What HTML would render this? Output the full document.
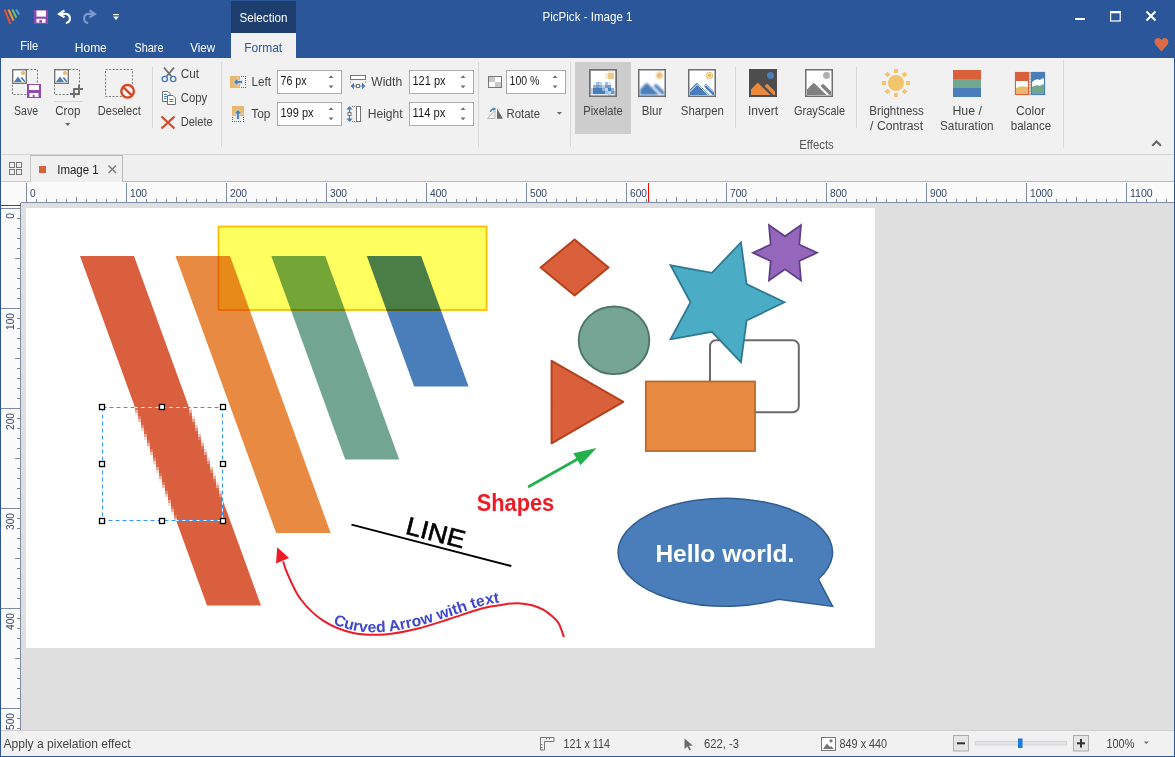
<!DOCTYPE html>
<html><head><meta charset="utf-8">
<style>
*{margin:0;padding:0}
html,body{width:1175px;height:757px;overflow:hidden;background:#f1f1f1}
svg{display:block;font-family:"Liberation Sans",sans-serif}
</style></head><body>
<svg width="1175" height="757" viewBox="0 0 1175 757">
<rect x="0" y="0" width="1175" height="58" fill="#2b579a"/>
<rect x="231" y="1" width="65" height="32" fill="#1e3e6e"/>
<rect x="231" y="33" width="65" height="25" fill="#f1f1f1"/>
<rect x="1" y="58" width="1173" height="96" fill="#f1f1f1"/>
<rect x="1" y="154" width="1173" height="1" fill="#d5d5d5"/>
<rect x="1" y="155" width="1173" height="27" fill="#f0f0f0"/>
<rect x="1" y="181" width="30" height="1" fill="#c9c9c9"/>
<rect x="30" y="155" width="1" height="27" fill="#c9c9c9"/>
<rect x="31" y="155" width="92" height="1" fill="#b9b9b9"/>
<rect x="122" y="155" width="1" height="27" fill="#b9b9b9"/>
<rect x="123" y="181" width="1051" height="1" fill="#b9b9b9"/>
<rect x="1" y="182" width="1173" height="21" fill="#fbfbfb"/>
<rect x="1" y="182" width="20" height="548" fill="#fbfbfb"/>
<rect x="21" y="203" width="1153" height="527" fill="#dfdfdf"/>
<rect x="26" y="208" width="849" height="440" fill="#ffffff"/>
<rect x="1" y="730" width="1173" height="1" fill="#cfcfcf"/>
<rect x="1" y="731" width="1173" height="25" fill="#f1f1f1"/>
<rect x="0" y="0" width="1" height="757" fill="#2b579a"/>
<rect x="1174" y="0" width="1" height="757" fill="#2b579a"/>
<rect x="0" y="756" width="1175" height="1" fill="#2b579a"/>
<g stroke-width="2" stroke-linecap="butt"><line x1="4.6" y1="9.5" x2="10.4" y2="24" stroke="#e8542b"/><line x1="8.4" y1="9.5" x2="13.6" y2="20.6" stroke="#f39c35"/><line x1="12.2" y1="9.5" x2="16.4" y2="17.6" stroke="#7cc06a"/><line x1="16" y1="9.5" x2="19.2" y2="14.4" stroke="#4aa0d8"/></g>
<rect x="34" y="10" width="14" height="14" fill="#8e4bb0"/>
<rect x="36.5" y="10.5" width="9.4" height="6.1" fill="#ffffff"/>
<rect x="36.5" y="18.8" width="9" height="3.9" fill="#ffffff"/>
<rect x="39.3" y="19.9" width="2.7" height="2.8" fill="#8e4bb0"/>
<path d="M64.5 10.3 L59 13.9 L64.5 17.4" fill="none" stroke="#fff" stroke-width="2.1" stroke-linejoin="miter"/>
<path d="M59.5 13.9 H65.6 A4.6 4.6 0 0 1 66.2 23 H65.8" fill="none" stroke="#fff" stroke-width="2.1"/>
<path d="M89.5 10.3 L95 13.9 L89.5 17.4" fill="none" stroke="#7c9acb" stroke-width="2.1" stroke-linejoin="miter"/>
<path d="M94.5 13.9 H88.4 A4.6 4.6 0 0 0 87.8 23 H88.2" fill="none" stroke="#7c9acb" stroke-width="2.1"/>
<rect x="113" y="14" width="6" height="1.2" fill="#ffffff"/>
<path d="M113 16.5 H119 L116 20 Z" fill="#fff"/>
<text x="587.5" y="21" font-size="12" fill="#ffffff" text-anchor="middle" textLength="90" lengthAdjust="spacingAndGlyphs">PicPick - Image 1</text>
<text x="263.5" y="22" font-size="12" fill="#ffffff" text-anchor="middle" textLength="48" lengthAdjust="spacingAndGlyphs">Selection</text>
<rect x="1075" y="18" width="10" height="2" fill="#fff"/>
<rect x="1110.6" y="11.6" width="9.6" height="9.4" fill="none" stroke="#fff" stroke-width="1.2"/>
<rect x="1110" y="11" width="10.8" height="2.3" fill="#fff"/>
<path d="M1146.5 11.5 L1155.5 20.5 M1155.5 11.5 L1146.5 20.5" stroke="#fff" stroke-width="2"/>
<path d="M1161.5 51.5 L1155.8 45 C1153.5 42.2 1154.6 38 1158.2 38 C1159.8 38 1160.9 39 1161.5 40.2 C1162.1 39 1163.2 38 1164.8 38 C1168.4 38 1169.5 42.2 1167.2 45 Z" fill="#de6a45"/>
<text x="29.3" y="50" font-size="12" fill="#fff" text-anchor="middle" textLength="18" lengthAdjust="spacingAndGlyphs">File</text>
<text x="90.8" y="52" font-size="12" fill="#fff" text-anchor="middle" textLength="32" lengthAdjust="spacingAndGlyphs">Home</text>
<text x="149" y="52" font-size="12" fill="#fff" text-anchor="middle" textLength="29" lengthAdjust="spacingAndGlyphs">Share</text>
<text x="202.7" y="52" font-size="12" fill="#fff" text-anchor="middle" textLength="25" lengthAdjust="spacingAndGlyphs">View</text>
<text x="263.2" y="52" font-size="12" fill="#2b579a" text-anchor="middle" textLength="38" lengthAdjust="spacingAndGlyphs">Format</text>
<rect x="12.5" y="69.5" width="25" height="25" fill="none" stroke="#7a7a7a" stroke-width="1" stroke-dasharray="2 1.6"/>
<rect x="12.7" y="69.7" width="13.6" height="13.6" fill="#fff" stroke="#767676" stroke-width="1.4"/>
<circle cx="23" cy="73" r="2" fill="#e8b86d"/>
<path d="M14 82 L18 76.5 L22 82 Z" fill="#4a7ebb"/>
<path d="M20.5 78 L22 77 L25 80.5 L25 82 L24 82 Z" fill="#4a7ebb"/>
<rect x="27" y="84" width="14" height="14" fill="#8e4bb0"/>
<rect x="29" y="85" width="10" height="5" fill="#fff"/>
<rect x="29.5" y="93" width="9" height="4" fill="#fff"/>
<rect x="32.7" y="94.8" width="2" height="2.2" fill="#8e4bb0"/>
<text x="26" y="115" font-size="12" fill="#444444" text-anchor="middle" textLength="24" lengthAdjust="spacingAndGlyphs">Save</text>
<rect x="54.5" y="69.5" width="25" height="25" fill="none" stroke="#7a7a7a" stroke-width="1" stroke-dasharray="2 1.6"/>
<rect x="54.7" y="69.7" width="13.6" height="13.6" fill="#fff" stroke="#767676" stroke-width="1.4"/>
<circle cx="65" cy="73" r="2" fill="#e8b86d"/>
<path d="M56 82 L60 76.5 L64 82 Z" fill="#4a7ebb"/>
<path d="M62.5 78 L64 77 L67 80.5 L67 82 L66 82 Z" fill="#4a7ebb"/>
<path d="M74 89 V97.8 M70 94 H79.8 M79 84.8 V94.8 M73.2 89 H83" fill="none" stroke="#6e6e6e" stroke-width="1.9"/>
<rect x="54" y="101" width="29" height="1" fill="#d3d3d3"/>
<text x="67.8" y="115" font-size="12" fill="#444444" text-anchor="middle" textLength="25" lengthAdjust="spacingAndGlyphs">Crop</text>
<path d="M65 123 H70.5 L67.75 126 Z" fill="#6a6a6a"/>
<rect x="105.5" y="69.5" width="27" height="27" fill="none" stroke="#7a7a7a" stroke-width="1" stroke-dasharray="2 1.6"/>
<circle cx="127.6" cy="91.3" r="6.3" fill="#f1f1f1" stroke="#d24726" stroke-width="2.4"/>
<line x1="123.2" y1="87" x2="132" y2="95.6" stroke="#d24726" stroke-width="2.4"/>
<text x="119.3" y="115" font-size="12" fill="#444444" text-anchor="middle" textLength="43" lengthAdjust="spacingAndGlyphs">Deselect</text>
<rect x="152" y="67" width="1" height="61" fill="#d8d8d8"/>
<path d="M164 67.5 L171.5 76.5 M174 67.5 L166.5 76.5" stroke="#6e6e6e" stroke-width="1.8"/>
<circle cx="164.8" cy="79" r="2.6" fill="none" stroke="#4a7ebb" stroke-width="1.4"/>
<circle cx="173.2" cy="79" r="2.6" fill="none" stroke="#4a7ebb" stroke-width="1.4"/>
<text x="180.7" y="78" font-size="12" fill="#444444" textLength="18.3" lengthAdjust="spacingAndGlyphs">Cut</text>
<path d="M162.5 91.5 H168 L170 93.5 V101.5 H162.5 Z" fill="#fff" stroke="#6e6e6e" stroke-width="1"/>
<path d="M167.5 95.5 H173 L175.5 98 V104.5 H167.5 Z" fill="#fff" stroke="#6e6e6e" stroke-width="1"/>
<path d="M164 94.5 H167 M164 96.5 H167 M164 98.5 H166.5 M169.5 99.5 H173.5 M169.5 101.5 H173.5" stroke="#4a7ebb" stroke-width="1"/>
<text x="180.7" y="102" font-size="12" fill="#444444" textLength="26.5" lengthAdjust="spacingAndGlyphs">Copy</text>
<path d="M161.5 116.5 L174.5 128.5 M174.5 116.5 L161.5 128.5" stroke="#d24726" stroke-width="2.2"/>
<text x="180.7" y="126" font-size="12" fill="#444444" textLength="32" lengthAdjust="spacingAndGlyphs">Delete</text>
<rect x="221" y="62" width="1" height="85" fill="#d8d8d8"/>
<rect x="230" y="76" width="10" height="12" fill="#e8b86d"/>
<rect x="241" y="76" width="1" height="1" fill="#666"/>
<rect x="241" y="87" width="1" height="1" fill="#666"/>
<rect x="243" y="76" width="1" height="1" fill="#666"/>
<rect x="243" y="87" width="1" height="1" fill="#666"/>
<rect x="245" y="76" width="1" height="1" fill="#666"/>
<rect x="245" y="87" width="1" height="1" fill="#666"/>
<rect x="245" y="78" width="1" height="1" fill="#666"/>
<rect x="245" y="80" width="1" height="1" fill="#666"/>
<rect x="245" y="82" width="1" height="1" fill="#666"/>
<rect x="245" y="84" width="1" height="1" fill="#666"/>
<path d="M233.5 82 L237.8 77.8 V80.6 H242.5 V83.4 H237.8 V86.2 Z" fill="#4a7ebb" stroke="#fff" stroke-width="0.6"/>
<text x="251.5" y="86" font-size="12" fill="#444444" textLength="19.5" lengthAdjust="spacingAndGlyphs">Left</text>
<rect x="277.5" y="70.5" width="64" height="23" fill="#fff" stroke="#acacac" stroke-width="1"/>
<text x="280.5" y="84.7" font-size="12" fill="#1a1a1a" textLength="26" lengthAdjust="spacingAndGlyphs">76 px</text>
<path d="M328.5 78 H333.5 L331 75.3 Z M328.5 85.5 H333.5 L331 88.3 Z" fill="#707070"/>
<rect x="232" y="106" width="12" height="10" fill="#e8b86d"/>
<rect x="232" y="117" width="1" height="1" fill="#666"/>
<rect x="243" y="117" width="1" height="1" fill="#666"/>
<rect x="232" y="119" width="1" height="1" fill="#666"/>
<rect x="243" y="119" width="1" height="1" fill="#666"/>
<rect x="232" y="121" width="1" height="1" fill="#666"/>
<rect x="243" y="121" width="1" height="1" fill="#666"/>
<rect x="234" y="121" width="1" height="1" fill="#666"/>
<rect x="236" y="121" width="1" height="1" fill="#666"/>
<rect x="238" y="121" width="1" height="1" fill="#666"/>
<rect x="240" y="121" width="1" height="1" fill="#666"/>
<path d="M238 109.5 L233.8 113.8 H236.6 V119.5 H239.4 V113.8 H242.2 Z" fill="#4a7ebb" stroke="#fff" stroke-width="0.6"/>
<text x="251.3" y="118" font-size="12" fill="#444444" textLength="19.2" lengthAdjust="spacingAndGlyphs">Top</text>
<rect x="277.5" y="102.5" width="64" height="23" fill="#fff" stroke="#acacac" stroke-width="1"/>
<text x="280.5" y="116.7" font-size="12" fill="#1a1a1a" textLength="33" lengthAdjust="spacingAndGlyphs">199 px</text>
<path d="M328.5 110 H333.5 L331 107.3 Z M328.5 117.5 H333.5 L331 120.3 Z" fill="#707070"/>
<rect x="350.5" y="75.5" width="15" height="4" fill="#fff" stroke="#777" stroke-width="1"/>
<path d="M350.5 81.5 V83 M365.5 81.5 V83" stroke="#777" stroke-width="1" stroke-dasharray="1 1"/>
<path d="M350.5 86 L354 82.8 V89.2 Z M365.5 86 L362 82.8 V89.2 Z" fill="#4a7ebb"/><path d="M353.5 86 H356.5 M359.5 86 H362.5" stroke="#4a7ebb" stroke-width="1.2"/>
<rect x="356.5" y="84.5" width="3" height="3" fill="none" stroke="#777" stroke-width="1"/>
<text x="371.2" y="86" font-size="12" fill="#444444" textLength="31" lengthAdjust="spacingAndGlyphs">Width</text>
<rect x="409.5" y="70.5" width="64" height="23" fill="#fff" stroke="#acacac" stroke-width="1"/>
<text x="412.5" y="84.7" font-size="12" fill="#1a1a1a" textLength="33" lengthAdjust="spacingAndGlyphs">121 px</text>
<path d="M460.5 78 H465.5 L463 75.3 Z M460.5 85.5 H465.5 L463 88.3 Z" fill="#707070"/>
<rect x="356.5" y="106.5" width="4" height="15" fill="#fff" stroke="#777" stroke-width="1"/>
<path d="M349.5 106 L346.3 109.5 H352.7 Z M349.5 122 L346.3 118.5 H352.7 Z" fill="#4a7ebb"/><path d="M349.5 109 V112.5 M349.5 115.5 V119" stroke="#4a7ebb" stroke-width="1.2"/>
<rect x="348" y="112.5" width="3" height="3" fill="none" stroke="#777" stroke-width="1"/>
<path d="M352 106.5 H355 M352 121.5 H355" stroke="#777" stroke-width="1" stroke-dasharray="1 1"/>
<text x="367.7" y="118" font-size="12" fill="#444444" textLength="35" lengthAdjust="spacingAndGlyphs">Height</text>
<rect x="409.5" y="102.5" width="64" height="23" fill="#fff" stroke="#acacac" stroke-width="1"/>
<text x="412.5" y="116.7" font-size="12" fill="#1a1a1a" textLength="33" lengthAdjust="spacingAndGlyphs">114 px</text>
<path d="M460.5 110 H465.5 L463 107.3 Z M460.5 117.5 H465.5 L463 120.3 Z" fill="#707070"/>
<rect x="478" y="62" width="1" height="85" fill="#d8d8d8"/>
<rect x="488.5" y="76.5" width="13" height="11" fill="#fff" stroke="#777" stroke-width="1"/>
<rect x="489" y="77" width="6" height="5" fill="#c8c8c8"/>
<rect x="495" y="82" width="6" height="5" fill="#c8c8c8"/>
<rect x="506.5" y="70.5" width="59" height="23" fill="#fff" stroke="#acacac" stroke-width="1"/>
<text x="509.5" y="84.7" font-size="12" fill="#1a1a1a" textLength="30" lengthAdjust="spacingAndGlyphs">100 %</text>
<path d="M552.5 78 H557.5 L555 75.3 Z M552.5 85.5 H557.5 L555 88.3 Z" fill="#707070"/>
<path d="M487.5 118.5 L495 110.5 V118.5 Z" fill="none" stroke="#bcbcbc" stroke-width="1"/>
<path d="M497 118.7 V108.5 L503 118.7 Z" fill="#6a6a6a"/>
<path d="M490.5 112 Q491 109 494 109" fill="none" stroke="#4a7ebb" stroke-width="1.3"/>
<path d="M493.5 107 L496 109 L493.5 111 Z" fill="#4a7ebb"/>
<text x="506.5" y="118" font-size="12" fill="#444444" textLength="33.5" lengthAdjust="spacingAndGlyphs">Rotate</text>
<path d="M556.8 112 H562 L559.4 114.8 Z" fill="#6a6a6a"/>
<rect x="570" y="62" width="1" height="85" fill="#d8d8d8"/>
<rect x="575" y="62" width="56" height="72" fill="#cdcdcd"/>
<rect x="589.75" y="69.75" width="26.5" height="26.5" fill="#fff" stroke="#6f6f6f" stroke-width="1.5"/>
<rect x="608" y="70" width="3" height="3" fill="#f8ebd3"/>
<rect x="611" y="70" width="3" height="3" fill="#f8ebd3"/>
<rect x="605" y="73" width="3" height="3" fill="#f8ebd3"/>
<rect x="608" y="73" width="3" height="3" fill="#ecc889"/>
<rect x="611" y="73" width="3" height="3" fill="#ecc889"/>
<rect x="605" y="76" width="3" height="3" fill="#f8ebd3"/>
<rect x="608" y="76" width="3" height="3" fill="#ecc889"/>
<rect x="611" y="76" width="3" height="3" fill="#ecc889"/>
<rect x="593" y="82" width="3" height="3" fill="#eef3f9"/>
<rect x="596" y="82" width="3" height="3" fill="#a3bfdf"/>
<rect x="599" y="82" width="3" height="3" fill="#bcd0e7"/>
<rect x="605" y="82" width="3" height="3" fill="#a3bfdf"/>
<rect x="608" y="82" width="3" height="3" fill="#dfe8f3"/>
<rect x="593" y="85" width="3" height="3" fill="#8eb0d6"/>
<rect x="596" y="85" width="3" height="3" fill="#6f9acb"/>
<rect x="599" y="85" width="3" height="3" fill="#8eb0d6"/>
<rect x="602" y="85" width="3" height="3" fill="#bcd0e7"/>
<rect x="605" y="85" width="3" height="3" fill="#6f9acb"/>
<rect x="608" y="85" width="3" height="3" fill="#6f9acb"/>
<rect x="611" y="85" width="3" height="3" fill="#eef3f9"/>
<rect x="590" y="88" width="3" height="3" fill="#bcd0e7"/>
<rect x="593" y="88" width="3" height="3" fill="#4a7ebb"/>
<rect x="596" y="88" width="3" height="3" fill="#4a7ebb"/>
<rect x="599" y="88" width="3" height="3" fill="#4a7ebb"/>
<rect x="602" y="88" width="3" height="3" fill="#8eb0d6"/>
<rect x="605" y="88" width="3" height="3" fill="#bcd0e7"/>
<rect x="608" y="88" width="3" height="3" fill="#4a7ebb"/>
<rect x="611" y="88" width="3" height="3" fill="#8eb0d6"/>
<rect x="614" y="88" width="3" height="3" fill="#dfe8f3"/>
<rect x="590" y="91" width="3" height="3" fill="#bcd0e7"/>
<rect x="593" y="91" width="3" height="3" fill="#4a7ebb"/>
<rect x="596" y="91" width="3" height="3" fill="#4a7ebb"/>
<rect x="599" y="91" width="3" height="3" fill="#4a7ebb"/>
<rect x="602" y="91" width="3" height="3" fill="#4a7ebb"/>
<rect x="605" y="91" width="3" height="3" fill="#a3bfdf"/>
<rect x="608" y="91" width="3" height="3" fill="#bcd0e7"/>
<rect x="611" y="91" width="3" height="3" fill="#6f9acb"/>
<rect x="614" y="91" width="3" height="3" fill="#a3bfdf"/>
<rect x="590" y="94" width="3" height="2.5" fill="#dfe8f3"/>
<rect x="593" y="94" width="3" height="2.5" fill="#dfe8f3"/>
<rect x="596" y="94" width="3" height="2.5" fill="#dfe8f3"/>
<rect x="599" y="94" width="3" height="2.5" fill="#dfe8f3"/>
<rect x="602" y="94" width="3" height="2.5" fill="#dfe8f3"/>
<rect x="605" y="94" width="3" height="2.5" fill="#dfe8f3"/>
<rect x="608" y="94" width="3" height="2.5" fill="#bcd0e7"/>
<rect x="611" y="94" width="3" height="2.5" fill="#dfe8f3"/>
<rect x="614" y="94" width="3" height="2.5" fill="#bcd0e7"/>
<rect x="589.75" y="69.75" width="26.5" height="26.5" fill="none" stroke="#6f6f6f" stroke-width="1.5"/>
<text x="603" y="115" font-size="12" fill="#444444" text-anchor="middle" textLength="39.5" lengthAdjust="spacingAndGlyphs">Pixelate</text>
<rect x="638.75" y="69.75" width="26.5" height="26.5" fill="#fff" stroke="#6f6f6f" stroke-width="1.5"/>
<defs><filter id="bl" x="-20%" y="-20%" width="140%" height="140%"><feGaussianBlur stdDeviation="0.9"/></filter></defs>
<g filter="url(#bl)">
<path d="M640 95 V89.5 L646 83.3 Q646.7 82.6 647.4 83.3 L659.5 95 Z" fill="#4a7ebb"/>
<path d="M653.5 86 L655.3 84.2 Q656 83.6 656.7 84.2 L664 91.4 V95 H662.5 Z" fill="#4a7ebb"/>
<circle cx="659.5" cy="75.5" r="3.2" fill="#e8b86d"/>
</g>
<text x="652" y="115" font-size="12" fill="#444444" text-anchor="middle" textLength="20.5" lengthAdjust="spacingAndGlyphs">Blur</text>
<rect x="688.75" y="69.75" width="26.5" height="26.5" fill="#fff" stroke="#6f6f6f" stroke-width="1.5"/>
<path d="M690 95 V89.5 L696 83.3 Q696.7 82.6 697.4 83.3 L709.5 95 Z" fill="#4a7ebb"/>
<path d="M703.5 86 L705.3 84.2 Q706 83.6 706.7 84.2 L714 91.4 V95 H712.5 Z" fill="#4a7ebb"/>
<path d="M690 91.5 L696.7 85 Q697.4 84.4 698.1 85 L708.2 95 M704 86.4 L705.7 85.2 Q706.2 84.9 706.8 85.4 L713.8 92.4" fill="none" stroke="#fff" stroke-width="0.9"/>
<circle cx="709.5" cy="75.5" r="3.5" fill="#e8b86d"/>
<circle cx="709.5" cy="75.5" r="2.3" fill="none" stroke="#fff" stroke-width="0.8"/>
<text x="702.3" y="115" font-size="12" fill="#444444" text-anchor="middle" textLength="43" lengthAdjust="spacingAndGlyphs">Sharpen</text>
<rect x="735" y="67" width="1" height="61" fill="#d8d8d8"/>
<rect x="749.75" y="69.75" width="26.5" height="26.5" fill="#4d4d4d" stroke="#4d4d4d" stroke-width="1.5"/>
<path d="M751 95 V89.5 L757 83.3 Q757.7 82.6 758.4 83.3 L770.5 95 Z" fill="#e8893d"/>
<path d="M764.5 86 L766.3 84.2 Q767 83.6 767.7 84.2 L775 91.4 V95 H773.5 Z" fill="#e8893d"/>
<circle cx="770.5" cy="75.5" r="3.5" fill="#4a7ebb"/>
<text x="763" y="115" font-size="12" fill="#444444" text-anchor="middle" textLength="30" lengthAdjust="spacingAndGlyphs">Invert</text>
<rect x="805.75" y="69.75" width="26.5" height="26.5" fill="#fff" stroke="#6f6f6f" stroke-width="1.5"/>
<path d="M807 95 V89.5 L813 83.3 Q813.7 82.6 814.4 83.3 L826.5 95 Z" fill="#808080"/>
<path d="M820.5 86 L822.3 84.2 Q823 83.6 823.7 84.2 L831 91.4 V95 H829.5 Z" fill="#808080"/>
<circle cx="826.5" cy="75.5" r="3.4" fill="#b0b0b0"/>
<text x="819.6" y="115" font-size="12" fill="#444444" text-anchor="middle" textLength="51" lengthAdjust="spacingAndGlyphs">GrayScale</text>
<rect x="856" y="67" width="1" height="61" fill="#d8d8d8"/>
<text x="816.5" y="149" font-size="12" fill="#555" text-anchor="middle" textLength="34.5" lengthAdjust="spacingAndGlyphs">Effects</text>
<circle cx="896" cy="83" r="8" fill="#f2c46d"/>
<rect x="906.0" y="81.0" width="4" height="4" fill="#f2c46d" transform="rotate(0 908.0 83.0)"/>
<rect x="902.4852813742385" y="89.48528137423857" width="4" height="4" fill="#f2c46d" transform="rotate(45 904.4852813742385 91.48528137423857)"/>
<rect x="894.0" y="93.0" width="4" height="4" fill="#f2c46d" transform="rotate(90 896.0 95.0)"/>
<rect x="885.5147186257615" y="89.48528137423857" width="4" height="4" fill="#f2c46d" transform="rotate(135 887.5147186257615 91.48528137423857)"/>
<rect x="882.0" y="81.0" width="4" height="4" fill="#f2c46d" transform="rotate(180 884.0 83.0)"/>
<rect x="885.5147186257615" y="72.51471862576143" width="4" height="4" fill="#f2c46d" transform="rotate(225 887.5147186257615 74.51471862576143)"/>
<rect x="894.0" y="69.0" width="4" height="4" fill="#f2c46d" transform="rotate(270 896.0 71.0)"/>
<rect x="902.4852813742385" y="72.51471862576143" width="4" height="4" fill="#f2c46d" transform="rotate(315 904.4852813742385 74.51471862576143)"/>
<text x="896.6" y="115" font-size="12" fill="#444444" text-anchor="middle" textLength="54.5" lengthAdjust="spacingAndGlyphs">Brightness</text>
<text x="896.6" y="130" font-size="12" fill="#444444" text-anchor="middle" textLength="53" lengthAdjust="spacingAndGlyphs">/ Contrast</text>
<rect x="953" y="70" width="28" height="9" fill="#d9603b"/>
<rect x="953" y="79" width="28" height="9" fill="#72a68f"/>
<rect x="953" y="88" width="28" height="9" fill="#4a7ebb"/>
<text x="967.2" y="115" font-size="12" fill="#444444" text-anchor="middle" textLength="29.5" lengthAdjust="spacingAndGlyphs">Hue /</text>
<text x="966.8" y="130" font-size="12" fill="#444444" text-anchor="middle" textLength="53.5" lengthAdjust="spacingAndGlyphs">Saturation</text>
<rect x="1015.5" y="72.5" width="13" height="22" fill="#fff" stroke="#d9603b" stroke-width="1.2"/>
<rect x="1031.5" y="72.5" width="13" height="22" fill="#fff" stroke="#4a7ebb" stroke-width="1.2"/>
<path d="M1016 94 V84 Q1018 79 1021 81 Q1024 78 1028 82 V94 Z" fill="#fff"/>
<path d="M1016 94 V88 Q1021 85 1028 87 V94 Z" fill="#e8b86d"/>
<path d="M1032 94 V87 Q1036 84 1040 86 Q1043 83 1044 85 V94 Z" fill="#72a68f"/>
<rect x="1016" y="73" width="12" height="8" fill="#d9603b"/>
<path d="M1016 81 Q1018 77 1021 79 Q1024 76 1028 80 V73 H1016 Z" fill="#d9603b"/>
<path d="M1032 82 Q1036 78 1040 80 Q1043 77 1044 79 V73 H1032 Z" fill="#4a7ebb"/>
<path d="M1030 72 V96" stroke="#888" stroke-width="1" stroke-dasharray="2 1"/>
<text x="1030.6" y="115" font-size="12" fill="#444444" text-anchor="middle" textLength="29" lengthAdjust="spacingAndGlyphs">Color</text>
<text x="1031" y="130" font-size="12" fill="#444444" text-anchor="middle" textLength="40.5" lengthAdjust="spacingAndGlyphs">balance</text>
<rect x="1063" y="60" width="1" height="88" fill="#d8d8d8"/>
<path d="M1152.3 145.8 L1156.6 141.5 L1160.9 145.8" fill="none" stroke="#666" stroke-width="2"/>
<rect x="9.5" y="162.5" width="5" height="5" fill="none" stroke="#777" stroke-width="1"/>
<rect x="16.5" y="162.5" width="5" height="5" fill="none" stroke="#777" stroke-width="1"/>
<rect x="9.5" y="169.5" width="5" height="5" fill="none" stroke="#777" stroke-width="1"/>
<rect x="16.5" y="169.5" width="5" height="5" fill="none" stroke="#777" stroke-width="1"/>
<rect x="39" y="166" width="7" height="7" fill="#d9603b"/>
<text x="57.2" y="174" font-size="12" fill="#222" textLength="41.5" lengthAdjust="spacingAndGlyphs">Image 1</text>
<path d="M108.5 165.5 L116 173 M116 165.5 L108.5 173" stroke="#777" stroke-width="1.3"/>
<rect x="21" y="202" width="1153" height="1" fill="#7d8ca3"/>
<path d="M26.5 183 V202 M36.5 199 V202 M46.5 199 V202 M56.5 199 V202 M66.5 199 V202 M76.5 197 V202 M86.5 199 V202 M96.5 199 V202 M106.5 199 V202 M116.5 199 V202 M126.5 183 V202 M136.5 199 V202 M146.5 199 V202 M156.5 199 V202 M166.5 199 V202 M176.5 197 V202 M186.5 199 V202 M196.5 199 V202 M206.5 199 V202 M216.5 199 V202 M226.5 183 V202 M236.5 199 V202 M246.5 199 V202 M256.5 199 V202 M266.5 199 V202 M276.5 197 V202 M286.5 199 V202 M296.5 199 V202 M306.5 199 V202 M316.5 199 V202 M326.5 183 V202 M336.5 199 V202 M346.5 199 V202 M356.5 199 V202 M366.5 199 V202 M376.5 197 V202 M386.5 199 V202 M396.5 199 V202 M406.5 199 V202 M416.5 199 V202 M426.5 183 V202 M436.5 199 V202 M446.5 199 V202 M456.5 199 V202 M466.5 199 V202 M476.5 197 V202 M486.5 199 V202 M496.5 199 V202 M506.5 199 V202 M516.5 199 V202 M526.5 183 V202 M536.5 199 V202 M546.5 199 V202 M556.5 199 V202 M566.5 199 V202 M576.5 197 V202 M586.5 199 V202 M596.5 199 V202 M606.5 199 V202 M616.5 199 V202 M626.5 183 V202 M636.5 199 V202 M646.5 199 V202 M656.5 199 V202 M666.5 199 V202 M676.5 197 V202 M686.5 199 V202 M696.5 199 V202 M706.5 199 V202 M716.5 199 V202 M726.5 183 V202 M736.5 199 V202 M746.5 199 V202 M756.5 199 V202 M766.5 199 V202 M776.5 197 V202 M786.5 199 V202 M796.5 199 V202 M806.5 199 V202 M816.5 199 V202 M826.5 183 V202 M836.5 199 V202 M846.5 199 V202 M856.5 199 V202 M866.5 199 V202 M876.5 197 V202 M886.5 199 V202 M896.5 199 V202 M906.5 199 V202 M916.5 199 V202 M926.5 183 V202 M936.5 199 V202 M946.5 199 V202 M956.5 199 V202 M966.5 199 V202 M976.5 197 V202 M986.5 199 V202 M996.5 199 V202 M1006.5 199 V202 M1016.5 199 V202 M1026.5 183 V202 M1036.5 199 V202 M1046.5 199 V202 M1056.5 199 V202 M1066.5 199 V202 M1076.5 197 V202 M1086.5 199 V202 M1096.5 199 V202 M1106.5 199 V202 M1116.5 199 V202 M1126.5 183 V202 M1136.5 199 V202 M1146.5 199 V202 M1156.5 199 V202 M1166.5 199 V202" stroke="#7d8ca3" stroke-width="1"/>
<text x="30" y="197" font-size="11" fill="#34466a" textLength="5.7" lengthAdjust="spacingAndGlyphs">0</text>
<text x="130" y="197" font-size="11" fill="#34466a" textLength="17.0" lengthAdjust="spacingAndGlyphs">100</text>
<text x="230" y="197" font-size="11" fill="#34466a" textLength="17.0" lengthAdjust="spacingAndGlyphs">200</text>
<text x="330" y="197" font-size="11" fill="#34466a" textLength="17.0" lengthAdjust="spacingAndGlyphs">300</text>
<text x="430" y="197" font-size="11" fill="#34466a" textLength="17.0" lengthAdjust="spacingAndGlyphs">400</text>
<text x="530" y="197" font-size="11" fill="#34466a" textLength="17.0" lengthAdjust="spacingAndGlyphs">500</text>
<text x="630" y="197" font-size="11" fill="#34466a" textLength="17.0" lengthAdjust="spacingAndGlyphs">600</text>
<text x="730" y="197" font-size="11" fill="#34466a" textLength="17.0" lengthAdjust="spacingAndGlyphs">700</text>
<text x="830" y="197" font-size="11" fill="#34466a" textLength="17.0" lengthAdjust="spacingAndGlyphs">800</text>
<text x="930" y="197" font-size="11" fill="#34466a" textLength="17.0" lengthAdjust="spacingAndGlyphs">900</text>
<text x="1030" y="197" font-size="11" fill="#34466a" textLength="22.7" lengthAdjust="spacingAndGlyphs">1000</text>
<text x="1130" y="197" font-size="11" fill="#34466a" textLength="22.7" lengthAdjust="spacingAndGlyphs">1100</text>
<rect x="648" y="183" width="1" height="19" fill="#ff0000"/>
<rect x="20" y="203" width="1" height="527" fill="#7d8ca3"/>
<path d="M1 208.5 H20 M17 218.5 H20 M17 228.5 H20 M17 238.5 H20 M17 248.5 H20 M15 258.5 H20 M17 268.5 H20 M17 278.5 H20 M17 288.5 H20 M17 298.5 H20 M1 308.5 H20 M17 318.5 H20 M17 328.5 H20 M17 338.5 H20 M17 348.5 H20 M15 358.5 H20 M17 368.5 H20 M17 378.5 H20 M17 388.5 H20 M17 398.5 H20 M1 408.5 H20 M17 418.5 H20 M17 428.5 H20 M17 438.5 H20 M17 448.5 H20 M15 458.5 H20 M17 468.5 H20 M17 478.5 H20 M17 488.5 H20 M17 498.5 H20 M1 508.5 H20 M17 518.5 H20 M17 528.5 H20 M17 538.5 H20 M17 548.5 H20 M15 558.5 H20 M17 568.5 H20 M17 578.5 H20 M17 588.5 H20 M17 598.5 H20 M1 608.5 H20 M17 618.5 H20 M17 628.5 H20 M17 638.5 H20 M17 648.5 H20 M15 658.5 H20 M17 668.5 H20 M17 678.5 H20 M17 688.5 H20 M17 698.5 H20 M1 708.5 H20 M17 718.5 H20 M17 728.5 H20" stroke="#7d8ca3" stroke-width="1"/>
<text x="0" y="0" font-size="11" fill="#34466a" textLength="5.7" lengthAdjust="spacingAndGlyphs" transform="translate(14 218.7) rotate(-90)">0</text>
<text x="0" y="0" font-size="11" fill="#34466a" textLength="17.0" lengthAdjust="spacingAndGlyphs" transform="translate(14 330.0) rotate(-90)">100</text>
<text x="0" y="0" font-size="11" fill="#34466a" textLength="17.0" lengthAdjust="spacingAndGlyphs" transform="translate(14 430.0) rotate(-90)">200</text>
<text x="0" y="0" font-size="11" fill="#34466a" textLength="17.0" lengthAdjust="spacingAndGlyphs" transform="translate(14 530.0) rotate(-90)">300</text>
<text x="0" y="0" font-size="11" fill="#34466a" textLength="17.0" lengthAdjust="spacingAndGlyphs" transform="translate(14 630.0) rotate(-90)">400</text>
<text x="0" y="0" font-size="11" fill="#34466a" textLength="17.0" lengthAdjust="spacingAndGlyphs" transform="translate(14 730.0) rotate(-90)">500</text>
<rect x="1" y="205" width="20" height="1" fill="#ff0000"/>
<path d="M80 256 H134 L261.0083 605.5 H207.00830000000002 Z" fill="#d95f3f"/>
<rect x="102" y="407" width="121" height="114" fill="#ffffff"/>
<rect x="135" y="407" width="3" height="3" fill="#de755a"/>
<rect x="138" y="407" width="51" height="3" fill="#d95f3f"/>
<rect x="189" y="407" width="3" height="3" fill="#fae9e4"/>
<rect x="135" y="410" width="3" height="3" fill="#ecaf9f"/>
<rect x="138" y="410" width="51" height="3" fill="#d95f3f"/>
<rect x="189" y="410" width="3" height="3" fill="#ecaf9f"/>
<rect x="135" y="413" width="3" height="3" fill="#fae9e4"/>
<rect x="138" y="413" width="51" height="3" fill="#d95f3f"/>
<rect x="189" y="413" width="3" height="3" fill="#de755a"/>
<rect x="138" y="416" width="3" height="3" fill="#e1836a"/>
<rect x="141" y="416" width="51" height="3" fill="#d95f3f"/>
<rect x="192" y="416" width="3" height="3" fill="#f7dbd4"/>
<rect x="138" y="419" width="3" height="3" fill="#efbcaf"/>
<rect x="141" y="419" width="51" height="3" fill="#d95f3f"/>
<rect x="192" y="419" width="3" height="3" fill="#e9a28f"/>
<rect x="138" y="422" width="3" height="3" fill="#fdf6f4"/>
<rect x="141" y="422" width="3" height="3" fill="#da6344"/>
<rect x="144" y="422" width="48" height="3" fill="#d95f3f"/>
<rect x="192" y="422" width="3" height="3" fill="#db684a"/>
<rect x="195" y="422" width="3" height="3" fill="#fefbfa"/>
<rect x="141" y="425" width="3" height="3" fill="#e5907a"/>
<rect x="144" y="425" width="51" height="3" fill="#d95f3f"/>
<rect x="195" y="425" width="3" height="3" fill="#f3cec4"/>
<rect x="141" y="428" width="3" height="3" fill="#f3cec4"/>
<rect x="144" y="428" width="51" height="3" fill="#d95f3f"/>
<rect x="195" y="428" width="3" height="3" fill="#e5907a"/>
<rect x="141" y="431" width="3" height="3" fill="#fefbfa"/>
<rect x="144" y="431" width="3" height="3" fill="#db684a"/>
<rect x="147" y="431" width="48" height="3" fill="#d95f3f"/>
<rect x="195" y="431" width="3" height="3" fill="#da6344"/>
<rect x="198" y="431" width="3" height="3" fill="#fdf6f4"/>
<rect x="144" y="434" width="3" height="3" fill="#e9a28f"/>
<rect x="147" y="434" width="51" height="3" fill="#d95f3f"/>
<rect x="198" y="434" width="3" height="3" fill="#efbcaf"/>
<rect x="144" y="437" width="3" height="3" fill="#f7dbd4"/>
<rect x="147" y="437" width="51" height="3" fill="#d95f3f"/>
<rect x="198" y="437" width="3" height="3" fill="#e1836a"/>
<rect x="147" y="440" width="3" height="3" fill="#de755a"/>
<rect x="150" y="440" width="51" height="3" fill="#d95f3f"/>
<rect x="201" y="440" width="3" height="3" fill="#fae9e4"/>
<rect x="147" y="443" width="3" height="3" fill="#ecaf9f"/>
<rect x="150" y="443" width="51" height="3" fill="#d95f3f"/>
<rect x="201" y="443" width="3" height="3" fill="#ecaf9f"/>
<rect x="147" y="446" width="3" height="3" fill="#fae9e4"/>
<rect x="150" y="446" width="51" height="3" fill="#d95f3f"/>
<rect x="201" y="446" width="3" height="3" fill="#de755a"/>
<rect x="150" y="449" width="3" height="3" fill="#e1836a"/>
<rect x="153" y="449" width="51" height="3" fill="#d95f3f"/>
<rect x="204" y="449" width="3" height="3" fill="#f7dbd4"/>
<rect x="150" y="452" width="3" height="3" fill="#efbcaf"/>
<rect x="153" y="452" width="51" height="3" fill="#d95f3f"/>
<rect x="204" y="452" width="3" height="3" fill="#e9a28f"/>
<rect x="150" y="455" width="3" height="3" fill="#fdf6f4"/>
<rect x="153" y="455" width="3" height="3" fill="#da6344"/>
<rect x="156" y="455" width="48" height="3" fill="#d95f3f"/>
<rect x="204" y="455" width="3" height="3" fill="#db684a"/>
<rect x="207" y="455" width="3" height="3" fill="#fefbfa"/>
<rect x="153" y="458" width="3" height="3" fill="#e5907a"/>
<rect x="156" y="458" width="51" height="3" fill="#d95f3f"/>
<rect x="207" y="458" width="3" height="3" fill="#f3cec4"/>
<rect x="153" y="461" width="3" height="3" fill="#f3cec4"/>
<rect x="156" y="461" width="51" height="3" fill="#d95f3f"/>
<rect x="207" y="461" width="3" height="3" fill="#e5907a"/>
<rect x="153" y="464" width="3" height="3" fill="#fefbfa"/>
<rect x="156" y="464" width="3" height="3" fill="#db684a"/>
<rect x="159" y="464" width="48" height="3" fill="#d95f3f"/>
<rect x="207" y="464" width="3" height="3" fill="#da6344"/>
<rect x="210" y="464" width="3" height="3" fill="#fdf6f4"/>
<rect x="156" y="467" width="3" height="3" fill="#e9a28f"/>
<rect x="159" y="467" width="51" height="3" fill="#d95f3f"/>
<rect x="210" y="467" width="3" height="3" fill="#efbcaf"/>
<rect x="156" y="470" width="3" height="3" fill="#f7dbd4"/>
<rect x="159" y="470" width="51" height="3" fill="#d95f3f"/>
<rect x="210" y="470" width="3" height="3" fill="#e1836a"/>
<rect x="159" y="473" width="3" height="3" fill="#de755a"/>
<rect x="162" y="473" width="51" height="3" fill="#d95f3f"/>
<rect x="213" y="473" width="3" height="3" fill="#fae9e4"/>
<rect x="159" y="476" width="3" height="3" fill="#ecaf9f"/>
<rect x="162" y="476" width="51" height="3" fill="#d95f3f"/>
<rect x="213" y="476" width="3" height="3" fill="#ecaf9f"/>
<rect x="159" y="479" width="3" height="3" fill="#fae9e4"/>
<rect x="162" y="479" width="51" height="3" fill="#d95f3f"/>
<rect x="213" y="479" width="3" height="3" fill="#de755a"/>
<rect x="162" y="482" width="3" height="3" fill="#e1836a"/>
<rect x="165" y="482" width="51" height="3" fill="#d95f3f"/>
<rect x="216" y="482" width="3" height="3" fill="#f7dbd4"/>
<rect x="162" y="485" width="3" height="3" fill="#efbcaf"/>
<rect x="165" y="485" width="51" height="3" fill="#d95f3f"/>
<rect x="216" y="485" width="3" height="3" fill="#e9a28f"/>
<rect x="162" y="488" width="3" height="3" fill="#fdf6f4"/>
<rect x="165" y="488" width="3" height="3" fill="#da6344"/>
<rect x="168" y="488" width="48" height="3" fill="#d95f3f"/>
<rect x="216" y="488" width="3" height="3" fill="#db684a"/>
<rect x="219" y="488" width="3" height="3" fill="#fefbfa"/>
<rect x="165" y="491" width="3" height="3" fill="#e5907a"/>
<rect x="168" y="491" width="51" height="3" fill="#d95f3f"/>
<rect x="219" y="491" width="3" height="3" fill="#f3cec4"/>
<rect x="165" y="494" width="3" height="3" fill="#f3cec4"/>
<rect x="168" y="494" width="51" height="3" fill="#d95f3f"/>
<rect x="219" y="494" width="3" height="3" fill="#e5907a"/>
<rect x="165" y="497" width="3" height="3" fill="#fefbfa"/>
<rect x="168" y="497" width="3" height="3" fill="#db684a"/>
<rect x="171" y="497" width="48" height="3" fill="#d95f3f"/>
<rect x="219" y="497" width="3" height="3" fill="#da6344"/>
<rect x="222" y="497" width="1" height="3" fill="#fdf6f4"/>
<rect x="168" y="500" width="3" height="3" fill="#e9a28f"/>
<rect x="171" y="500" width="51" height="3" fill="#d95f3f"/>
<rect x="222" y="500" width="1" height="3" fill="#efbcaf"/>
<rect x="168" y="503" width="3" height="3" fill="#f7dbd4"/>
<rect x="171" y="503" width="51" height="3" fill="#d95f3f"/>
<rect x="222" y="503" width="1" height="3" fill="#e1836a"/>
<rect x="171" y="506" width="3" height="3" fill="#de755a"/>
<rect x="174" y="506" width="49" height="3" fill="#d95f3f"/>
<rect x="171" y="509" width="3" height="3" fill="#ecaf9f"/>
<rect x="174" y="509" width="49" height="3" fill="#d95f3f"/>
<rect x="171" y="512" width="3" height="3" fill="#fae9e4"/>
<rect x="174" y="512" width="49" height="3" fill="#d95f3f"/>
<rect x="174" y="515" width="3" height="3" fill="#e1836a"/>
<rect x="177" y="515" width="46" height="3" fill="#d95f3f"/>
<rect x="174" y="518" width="3" height="3" fill="#efbcaf"/>
<rect x="177" y="518" width="46" height="3" fill="#d95f3f"/>
<path d="M175.5 256 H230.0 L330.66179999999997 533 H276.16179999999997 Z" fill="#e88a42"/>
<path d="M271.3 256 H325.3 L399.21556 459.4 H345.21556 Z" fill="#73a692"/>
<path d="M366.8 256 H421.2 L468.58736 386.4 H414.18736 Z" fill="#4a7eba"/>
<rect x="218.5" y="226.5" width="268" height="83.5" fill="#ffff60" stroke="#ffbf00" stroke-width="1.8" style="mix-blend-mode:multiply"/>
<path d="M574.6 239.5 L608.5 267.6 L574.6 295.5 L540.6 267.6 Z" fill="#d9603b" stroke="#b5421c" stroke-width="2" stroke-linejoin="round"/>
<ellipse cx="614" cy="340.3" rx="35.3" ry="33.8" fill="#76a595" stroke="#4d7666" stroke-width="1.9"/>
<path d="M551.6 360.8 L623.3 401.8 L551.6 443.3 Z" fill="#d9603b" stroke="#b5421c" stroke-width="2" stroke-linejoin="round"/>
<rect x="710" y="340.3" width="88.8" height="72" rx="6" ry="6" fill="none" stroke="#6b6b6b" stroke-width="2"/>
<path d="M784.50,302.30 L746.58,320.52 L740.97,362.22 L711.92,331.78 L670.53,339.33 L690.50,302.30 L670.53,265.27 L711.92,272.82 L740.97,242.38 L746.58,284.08 Z" fill="#4bacc6" stroke="#2f7a92" stroke-width="1.8" stroke-linejoin="miter"/>
<path d="M817.00,252.80 L799.29,261.05 L801.00,280.51 L785.00,269.30 L769.00,280.51 L770.71,261.05 L753.00,252.80 L770.71,244.55 L769.00,225.09 L785.00,236.30 L801.00,225.09 L799.29,244.55 Z" fill="#9467bd" stroke="#5f4086" stroke-width="1.8"/>
<rect x="645.8" y="381.5" width="109.2" height="69.5" fill="#e88b42" stroke="#b56b2f" stroke-width="1.8"/>
<line x1="529" y1="486.5" x2="583" y2="456" stroke="#22b14c" stroke-width="2.6" stroke-linecap="round"/>
<path d="M596.6 448 L573.3 453.3 L580.5 465.3 Z" fill="#22b14c"/>
<text x="515.5" y="510.8" font-size="23" fill="#ed1c24" text-anchor="middle" font-weight="bold" textLength="77.4" lengthAdjust="spacingAndGlyphs">Shapes</text>
<line x1="351.5" y1="524.6" x2="511.3" y2="566" stroke="#000" stroke-width="2"/>
<text x="0" y="0" font-size="25" fill="#000" stroke="#000" stroke-width="0.6" textLength="60" lengthAdjust="spacingAndGlyphs" transform="translate(404.5 533.5) rotate(14.5)">LINE</text>
<path d="M563.9 637.1 C563.1 634.9 560.8 627.1 558.9 623.7 C557.0 620.3 555.3 619.1 552.8 616.8 C550.2 614.5 547.0 611.8 543.6 609.9 C540.2 608.0 536.3 606.4 532.1 605.3 C527.9 604.2 522.8 603.4 518.3 603.2 C513.8 603.0 511.4 603.3 505.3 604.2 C499.2 605.1 491.1 606.0 481.8 608.5 C472.5 611.0 460.2 615.6 449.4 619.0 C438.6 622.4 427.9 626.1 417.1 628.7 C406.3 631.3 395.5 633.7 384.7 634.4 C373.9 635.1 362.6 635.0 352.4 632.7 C342.2 630.5 332.1 626.4 323.5 620.9 C314.9 615.4 306.8 607.2 300.9 599.5 C294.9 591.8 290.8 580.9 287.8 574.5 C284.8 568.1 283.9 563.6 283.1 561.4" fill="none" stroke="#ed1c24" stroke-width="2"/>
<path d="M277.2 547.3 L276 563.4 L289.1 557.9 Z" fill="#ed1c24"/>
<path id="tp" d="M283.1 561.4 C283.9 563.6 284.8 568.1 287.8 574.5 C290.8 580.9 294.9 591.8 300.9 599.5 C306.8 607.2 314.9 615.4 323.5 620.9 C332.1 626.4 342.2 630.5 352.4 632.7 C362.6 635.0 373.9 635.1 384.7 634.4 C395.5 633.7 406.3 631.3 417.1 628.7 C427.9 626.1 438.6 622.4 449.4 619.0 C460.2 615.6 472.5 611.0 481.8 608.5 C491.1 606.0 499.2 605.1 505.3 604.2 C511.4 603.3 513.8 603.0 518.3 603.2 C522.8 603.4 527.9 604.2 532.1 605.3 C536.3 606.4 540.2 608.0 543.6 609.9 C547.0 611.8 550.2 614.5 552.8 616.8 C555.3 619.1 557.0 620.3 558.9 623.7 C560.8 627.1 563.1 634.9 563.9 637.1" fill="none"/>
<text font-size="15.5" font-weight="bold" fill="#3f48cc" transform="translate(0 -2.5)"><textPath href="#tp" startOffset="84" textLength="172" lengthAdjust="spacingAndGlyphs">Curved Arrow with text</textPath></text>
<path d="M818.3 579.2 A107.2 54 0 1 0 778.5 599.2 L832.6 606.4 Z" fill="#4a7eba" stroke="#2f5d92" stroke-width="1.5"/>
<text x="724.9" y="561.5" font-size="23" fill="#ffffff" text-anchor="middle" font-weight="bold" textLength="139" lengthAdjust="spacingAndGlyphs">Hello world.</text>
<rect x="102.5" y="407.5" width="120" height="113" fill="none" stroke="#fff" stroke-width="1"/>
<rect x="102.5" y="407.5" width="120" height="113" fill="none" stroke="#3399ff" stroke-width="1" stroke-dasharray="4 3"/>
<rect x="99.5" y="404.5" width="5" height="5" fill="#fff" stroke="#000" stroke-width="1.3"/>
<rect x="99.5" y="461.5" width="5" height="5" fill="#fff" stroke="#000" stroke-width="1.3"/>
<rect x="99.5" y="518.5" width="5" height="5" fill="#fff" stroke="#000" stroke-width="1.3"/>
<rect x="159.5" y="404.5" width="5" height="5" fill="#fff" stroke="#000" stroke-width="1.3"/>
<rect x="159.5" y="518.5" width="5" height="5" fill="#fff" stroke="#000" stroke-width="1.3"/>
<rect x="220.5" y="404.5" width="5" height="5" fill="#fff" stroke="#000" stroke-width="1.3"/>
<rect x="220.5" y="461.5" width="5" height="5" fill="#fff" stroke="#000" stroke-width="1.3"/>
<rect x="220.5" y="518.5" width="5" height="5" fill="#fff" stroke="#000" stroke-width="1.3"/>
<text x="3.5" y="748" font-size="12" fill="#444444" textLength="127" lengthAdjust="spacingAndGlyphs">Apply a pixelation effect</text>
<path d="M540.5 750 V737.5 H554 V741.5 H544.5 V750 Z" fill="none" stroke="#777" stroke-width="1"/>
<path d="M546.5 737.5 V739.5 M549.5 737.5 V739.5 M540.5 744.5 H542.5 M540.5 747.5 H542.5" stroke="#777" stroke-width="1"/>
<text x="563.5" y="748" font-size="12" fill="#444444" textLength="46.5" lengthAdjust="spacingAndGlyphs">121 x 114</text>
<path d="M684.5 738.5 V749 L687.3 746.4 L689.5 750.6 L691 749.8 L688.9 745.7 L692.8 745.5 Z" fill="#6a6a6a"/>
<text x="704" y="748" font-size="12" fill="#444444" textLength="35" lengthAdjust="spacingAndGlyphs">622, -3</text>
<rect x="821.5" y="737.5" width="14" height="13" fill="#fff" stroke="#777" stroke-width="1"/>
<path d="M823 749 L827 743.5 L830 747 L831 746 L834 749 Z" fill="#777"/><circle cx="831" cy="740.8" r="1.6" fill="#777"/>
<text x="839.6" y="748" font-size="12" fill="#444444" textLength="47.5" lengthAdjust="spacingAndGlyphs">849 x 440</text>
<rect x="953.5" y="735.5" width="15" height="15.5" fill="#e5e5e5" stroke="#adadad" stroke-width="1"/>
<rect x="957" y="742.3" width="8" height="2" fill="#333"/>
<rect x="975" y="741" width="92" height="4" fill="#e2e4e6"/>
<rect x="975.5" y="741.5" width="91" height="3.5" fill="none" stroke="#d0d3d6" stroke-width="1"/>
<rect x="1018" y="738.5" width="4.5" height="9.5" fill="#1e7ad6"/>
<rect x="1073.5" y="735.5" width="15" height="15.5" fill="#e5e5e5" stroke="#adadad" stroke-width="1"/>
<rect x="1077" y="742.3" width="8" height="2" fill="#333"/>
<rect x="1080" y="739" width="2" height="8.6" fill="#333"/>
<text x="1106.4" y="748" font-size="12" fill="#444444" textLength="28" lengthAdjust="spacingAndGlyphs">100%</text>
<path d="M1143.8 741.5 H1148.8 L1146.3 744.3 Z" fill="#777"/>
</svg>
</body></html>
